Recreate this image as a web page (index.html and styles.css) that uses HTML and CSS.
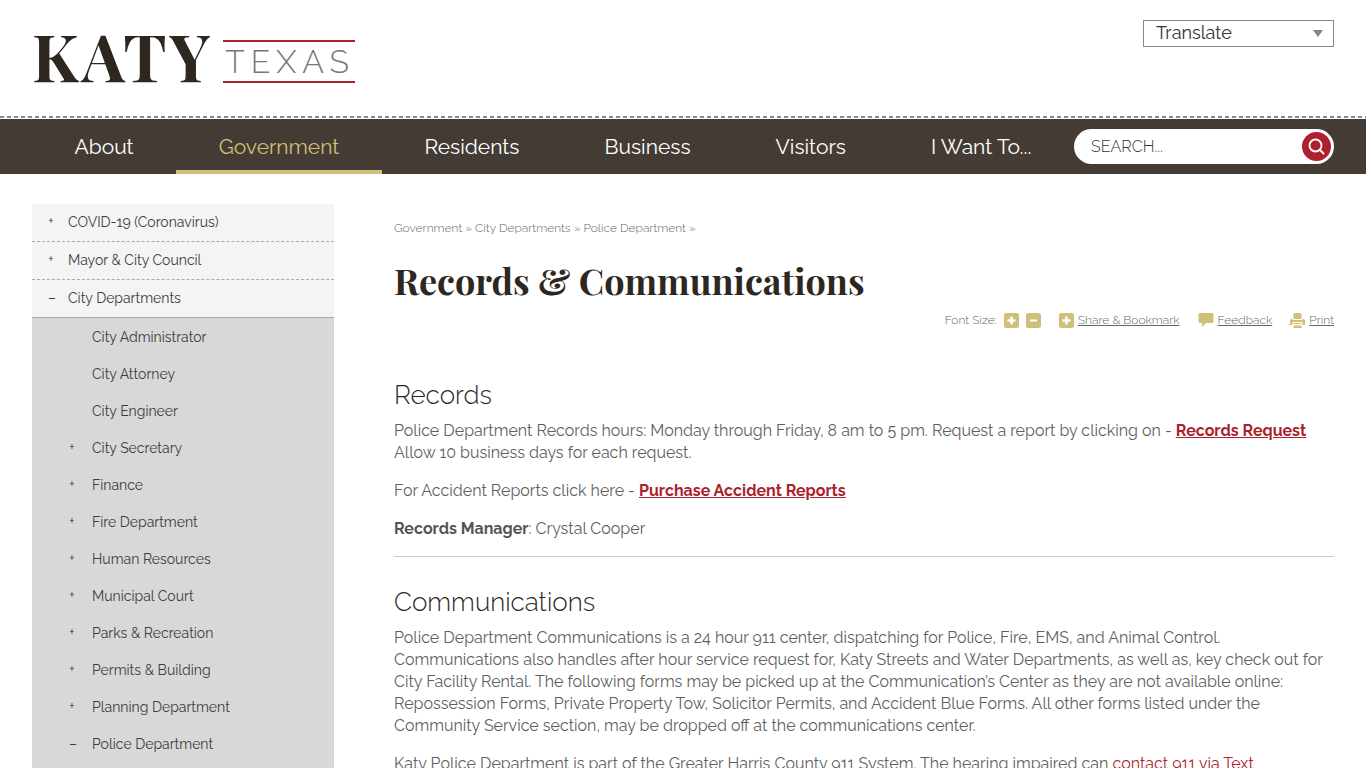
FILE: index.html
```html
<!DOCTYPE html>
<html lang="en">
<head>
<meta charset="utf-8">
<meta name="viewport" content="width=device-width, initial-scale=1">
<title>Records &amp; Communications | Katy, Texas</title>
<link rel="stylesheet" href="styles.css">
</head>
<body>
<header class="site-header">
  <a class="logo" href="#"><span class="logo-katy">KATY</span><span class="logo-texas">TEXAS</span></a>
  <div class="translate">
    <select class="translate-select" aria-label="Translate"><option>Translate</option></select>
    <svg class="translate-arrow" width="10" height="7" viewBox="0 0 10 7" aria-hidden="true"><path d="M0 0h10L5 7z" fill="#878787"/></svg>
  </div>
</header>
<div class="nav-bar">
  <nav class="main-nav" aria-label="Main">
    <a class="nav-link" href="#">About</a>
    <a class="nav-link active" href="#">Government</a>
    <a class="nav-link" href="#">Residents</a>
    <a class="nav-link" href="#">Business</a>
    <a class="nav-link" href="#">Visitors</a>
    <a class="nav-link" href="#">I Want To...</a>
  </nav>
  <form class="search">
    <input class="search-input" type="text" placeholder="SEARCH..." aria-label="Search">
    <button class="search-button" type="button" aria-label="Search">
      <svg width="29" height="29" viewBox="0 0 29 29" fill="none" stroke="#fff" stroke-width="1.800"><circle cx="13.500" cy="13.500" r="6"/><path d="M18 18l3.500 3.500" stroke-linecap="round"/></svg>
    </button>
  </form>
</div>
<div class="page">
  <nav class="side-nav" aria-label="Section">
    <a class="side-link" href="#"><span class="mark plus">+</span>COVID-19 (Coronavirus)</a>
    <a class="side-link" href="#"><span class="mark plus">+</span>Mayor &amp; City Council</a>
    <a class="side-link open" href="#"><span class="mark">–</span>City Departments</a>
    <div class="sub-nav">
      <a class="sub-link" href="#"><span class="mark"></span>City Administrator</a>
      <a class="sub-link" href="#"><span class="mark"></span>City Attorney</a>
      <a class="sub-link" href="#"><span class="mark"></span>City Engineer</a>
      <a class="sub-link" href="#"><span class="mark plus">+</span>City Secretary</a>
      <a class="sub-link" href="#"><span class="mark plus">+</span>Finance</a>
      <a class="sub-link" href="#"><span class="mark plus">+</span>Fire Department</a>
      <a class="sub-link" href="#"><span class="mark plus">+</span>Human Resources</a>
      <a class="sub-link" href="#"><span class="mark plus">+</span>Municipal Court</a>
      <a class="sub-link" href="#"><span class="mark plus">+</span>Parks &amp; Recreation</a>
      <a class="sub-link" href="#"><span class="mark plus">+</span>Permits &amp; Building</a>
      <a class="sub-link" href="#"><span class="mark plus">+</span>Planning Department</a>
      <a class="sub-link" href="#"><span class="mark">–</span>Police Department</a>
    </div>
  </nav>
  <main class="content">
    <div class="breadcrumbs"><a href="#">Government</a> » <a href="#">City Departments</a> » <a href="#">Police Department</a> »</div>
    <h1 class="title">Records &amp; Communications</h1>
    <div class="tools">
      <div class="tool font-size">
        <span>Font Size:</span>
        <button class="icon-button" type="button" aria-label="Increase font size"><svg width="15" height="15" viewBox="0 0 15 15"><rect width="15" height="15" rx="2.500" fill="#cfbf78"/><path d="M7.500 3.500v8M3.500 7.500h8" stroke="#fff" stroke-width="2.500"/></svg></button>
        <button class="icon-button" type="button" aria-label="Decrease font size"><svg width="15" height="15" viewBox="0 0 15 15"><rect width="15" height="15" rx="2.500" fill="#cfbf78"/><path d="M4 7.500h7" stroke="#fff" stroke-width="2"/></svg></button>
      </div>
      <a class="tool" href="#"><svg width="15" height="15" viewBox="0 0 15 15"><rect width="15" height="15" rx="2.500" fill="#cfbf78"/><path d="M7.500 3.500v8M3.500 7.500h8" stroke="#fff" stroke-width="2.500"/></svg><span>Share &amp; Bookmark</span></a>
      <a class="tool" href="#"><svg width="16" height="14" viewBox="0 0 16 14"><path d="M1.500 0h13l1 1v8l-1 1H8l-4 4v-4H1.500l-1-1V1z" fill="#cfbf78"/></svg><span>Feedback</span></a>
      <a class="tool" href="#"><svg width="15" height="15" viewBox="0 0 15 15" fill="#cfbf78"><path d="M4 0h6l1.500 1.500V6h-8V0zM1 6h1.500v1h10V6H14l1 1v5h-2.500V9h-10v3H0V7zM3.500 10h8v1h-8zM3.500 12.500h8V15h-8z"/></svg><span>Print</span></a>
    </div>
    <section class="block">
      <h2 class="heading">Records</h2>
      <p>Police Department Records hours: Monday through Friday, 8 am to 5 pm. Request a report by clicking on - <a class="strong-link" href="#">Records Request</a><br>Allow 10 business days for each request.</p>
      <p>For Accident Reports click here - <a class="strong-link" href="#">Purchase Accident Reports</a></p>
      <p><strong>Records Manager</strong>: Crystal Cooper</p>
    </section>
    <section class="block ruled">
      <h2 class="heading">Communications</h2>
      <p>Police Department Communications is a 24 hour 911 center, dispatching for Police, Fire, EMS, and Animal Control. Communications also handles after hour service request for, Katy Streets and Water Departments, as well as, key check out for City Facility Rental. The following forms may be picked up at the Communication’s Center as they are not available online: Repossession Forms, Private Property Tow, Solicitor Permits, and Accident Blue Forms. All other forms listed under the Community Service section, may be dropped off at the communications center.</p>
      <p>Katy Police Department is part of the Greater Harris County 911 System. The hearing impaired can <a class="text-link" href="#">contact 911 via Text</a></p>
    </section>
  </main>
</div>
</body>
</html>
```
FILE: styles.css
```css
* { box-sizing: border-box; }
body {
  margin: 0;
  height: 100vh;
  overflow: hidden;
  background: #fff;
  color: #5f5f5f;
  font-family: Raleway, "Open Sans", sans-serif;
  font-size: 16px;
  font-weight: 400;
  line-height: 22px;
}
a { color: inherit; text-decoration: none; }
button, input, select { font: inherit; color: inherit; }
.site-header {
  display: flex;
  justify-content: space-between;
  align-items: flex-start;
  height: 116px;
  padding: 20px 32px 0;
}
.logo { display: flex; align-items: center; gap: 10px; }
.logo-katy {
  color: #2e271f;
  font-family: "Playfair Display", "Liberation Serif", serif;
  font-size: 65px;
  font-weight: 700;
  letter-spacing: 3px;
  line-height: 70px;
}
.logo-texas {
  height: 43px;
  margin-top: 12px;
  padding-left: 2px;
  border-top: 2px solid #ad1f2d;
  border-bottom: 2px solid #ad1f2d;
  color: #777;
  font-family: Raleway, Lato, sans-serif;
  font-size: 32px;
  font-weight: 300;
  letter-spacing: 6px;
  line-height: 39px;
}
.translate { position: relative; }
.translate-select {
  display: block;
  width: 191px;
  height: 27px;
  padding: 0 12px 2px;
  border: 1px solid #878787;
  border-radius: 0;
  background: #fff;
  color: #333;
  font-size: 18px;
  appearance: none;
}
.translate-arrow { position: absolute; top: 10px; right: 11px; pointer-events: none; }
.nav-bar {
  display: flex;
  align-items: center;
  padding: 0 32px;
  border-top: 3px solid transparent;
  background:
    repeating-linear-gradient(90deg, #8a8a8a 0 4px, #fff 4px 7px) 0 0 / 100% 2px no-repeat border-box,
    linear-gradient(#443c34, #443c34) padding-box;
}
.main-nav { display: flex; flex: 1; }
.nav-link {
  flex: 1 1 auto;
  height: 55px;
  color: #fff;
  font-size: 21px;
  line-height: 56px;
  text-align: center;
}
.nav-link.active { border-bottom: 4px solid #cfbf78; color: #cfbf78; }
.search {
  display: flex;
  align-items: center;
  width: 260px;
  height: 35px;
  padding: 0 3px 0 17px;
  border-radius: 18px;
  background: #fff;
}
.search-input {
  flex: 1;
  min-width: 0;
  padding: 0;
  border: 0;
  outline: 0;
  background: none;
  color: #333;
  font-weight: 300;
}
.search-input::placeholder { color: #333; opacity: 1; }
.search-button {
  width: 29px;
  height: 29px;
  padding: 0;
  border: 0;
  border-radius: 50%;
  background: #b01f2e;
}
.search-button svg, .icon-button svg { display: block; }
.page {
  display: grid;
  grid-template-columns: 302px 1fr;
  gap: 60px;
  padding: 30px 32px 0;
}
.side-nav { color: #3d3d3d; font-size: 14px; }
.side-link, .sub-link { display: flex; }
.side-link {
  padding-left: 16px;
  border-bottom: 1px dashed #aaa;
  background: #f4f4f4;
  line-height: 37px;
}
.side-link.open { border-bottom-style: solid; }
.sub-nav { padding: 1px 0 20px; background: #d8d8d8; }
.sub-link { padding-left: 37px; line-height: 37px; }
.mark { flex: 0 0 20px; }
.sub-link .mark { flex-basis: 23px; }
.mark.plus { color: #222; font-size: 14px; font-weight: 300; line-height: 34px; }
.breadcrumbs { padding-top: 14px; color: #666; font-size: 12px; font-weight: 300; line-height: 20px; }
.title {
  margin: 17px 0 0;
  color: #2e271f;
  font-family: "Playfair Display", "Liberation Serif", serif;
  font-size: 36px;
  font-weight: 700;
  line-height: 50px;
}
.tools {
  display: flex;
  justify-content: flex-end;
  gap: 18px;
  padding-top: 6px;
  color: #666;
  font-size: 12px;
  font-weight: 300;
  line-height: 18px;
}
.tool { display: flex; align-items: center; gap: 4px; }
.font-size { gap: 7px; }
a.tool span { text-decoration: underline; }
.icon-button { padding: 0; border: 0; background: none; }
.block { padding-top: 49px; }
.ruled { margin-top: 16px; padding-top: 28px; border-top: 1px solid #ccc; }
.heading {
  margin: 0 0 7px;
  color: #2e271f;
  font-size: 26px;
  font-weight: 300;
  line-height: 35px;
}
.content p { margin: 0 0 16px; }
.content strong { color: #555; font-weight: 700; }
.strong-link { color: #ad1f2d; font-weight: 700; text-decoration: underline; }
.text-link { color: #ad1f2d; }
```
